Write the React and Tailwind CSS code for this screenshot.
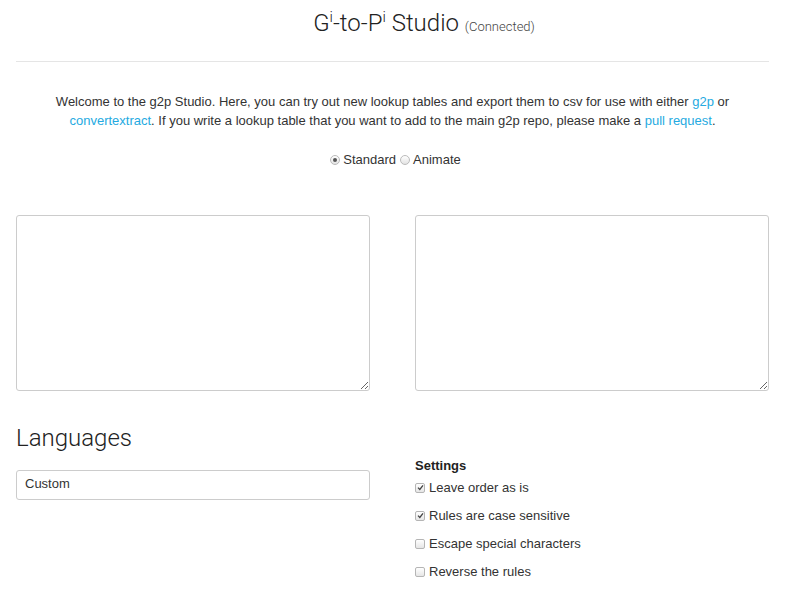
import React from 'react';

const Box = ({ checked }) => (
  <span className="flex items-center justify-center w-[10px] h-[10px] rounded-[2px] border border-[#b5b5b5] bg-gradient-to-b from-white to-[#e6e6e6]">
    {checked && (
      <svg width="7" height="7" viewBox="0 0 7 7">
        <path d="M1 3.6 L2.8 5.4 L6 1.3" fill="none" stroke="#444" strokeWidth="1.3" />
      </svg>
    )}
  </span>
);

const Check = ({ checked, label }) => (
  <label className="flex items-center gap-[4px] h-[28px] text-[13px] text-[#333]">
    <Box checked={checked} />
    {label}
  </label>
);

const Radio = ({ checked }) => (
  <span className="flex items-center justify-center w-[10px] h-[10px] rounded-full border border-[#bbb] bg-gradient-to-b from-white to-[#e3e3e3]">
    {checked && <span className="w-[4px] h-[4px] rounded-full bg-[#555]" />}
  </span>
);

export default function App() {
  return (
    <div className="min-h-screen bg-white pl-[16px] pr-[33px] font-['Liberation_Sans',Arial,sans-serif] text-[#333]">
      {/* Header */}
      <div className="flex items-baseline justify-center pt-[8px] pl-[63px] h-[62px] border-b border-[#e5e5e5]">
        <h1 className="text-[24px] font-['Roboto',sans-serif] font-light text-[#222] leading-[30px]">
          G<sup className="text-[15px] top-[-0.6em]">i</sup>-to-P<sup className="text-[15px] top-[-0.6em]">i</sup> Studio{' '}
          <small className="text-[13px] text-[#444]">(Connected)</small>
        </h1>
      </div>

      {/* Intro */}
      <p className="mt-[30px] text-center text-[13px] leading-[19px] px-[20px]">
        Welcome to the g2p Studio. Here, you can try out new lookup tables and export them to csv for use with either{' '}
        <a className="text-[#25aae1]">g2p</a> or{' '}
        <a className="text-[#25aae1]">convertextract</a>. If you write a lookup table that you want to add to the main g2p repo, please make a{' '}
        <a className="text-[#25aae1]">pull request</a>.
      </p>

      <div className="mt-[20px] pl-[6px] flex items-center justify-center gap-[3px] text-[13px]">
        <Radio checked />
        <span className="mr-[1px]">Standard</span>
        <Radio />
        <span>Animate</span>
      </div>

      {/* Editors */}
      <div className="mt-[45px] grid grid-cols-2 gap-[45px]">
        <textarea className="h-[176px] border border-[#ccc] rounded-[3px] resize-y" />
        <textarea className="h-[176px] border border-[#ccc] rounded-[3px] resize-y" />
      </div>

      <div className="mt-[22px] grid grid-cols-2 gap-[45px]">
        <div>
          <h2 className="text-[24px] font-['Roboto',sans-serif] font-light text-[#222] leading-[30px] mt-[10px]">Languages</h2>
          <input
            defaultValue="Custom"
            className="mt-[17px] w-full h-[30px] border border-[#ccc] rounded-[3px] px-[8px] pb-[2px] text-[13px] text-[#333]"
          />
        </div>
        <div className="pt-[43px]">
          <div className="text-[13px] font-bold text-[#222] leading-[20px]">Settings</div>
          <div className="flex flex-col -mt-[2px]">
            <Check checked label="Leave order as is" />
            <Check checked label="Rules are case sensitive" />
            <Check label="Escape special characters" />
            <Check label="Reverse the rules" />
          </div>
        </div>
      </div>
    </div>
  );
}
